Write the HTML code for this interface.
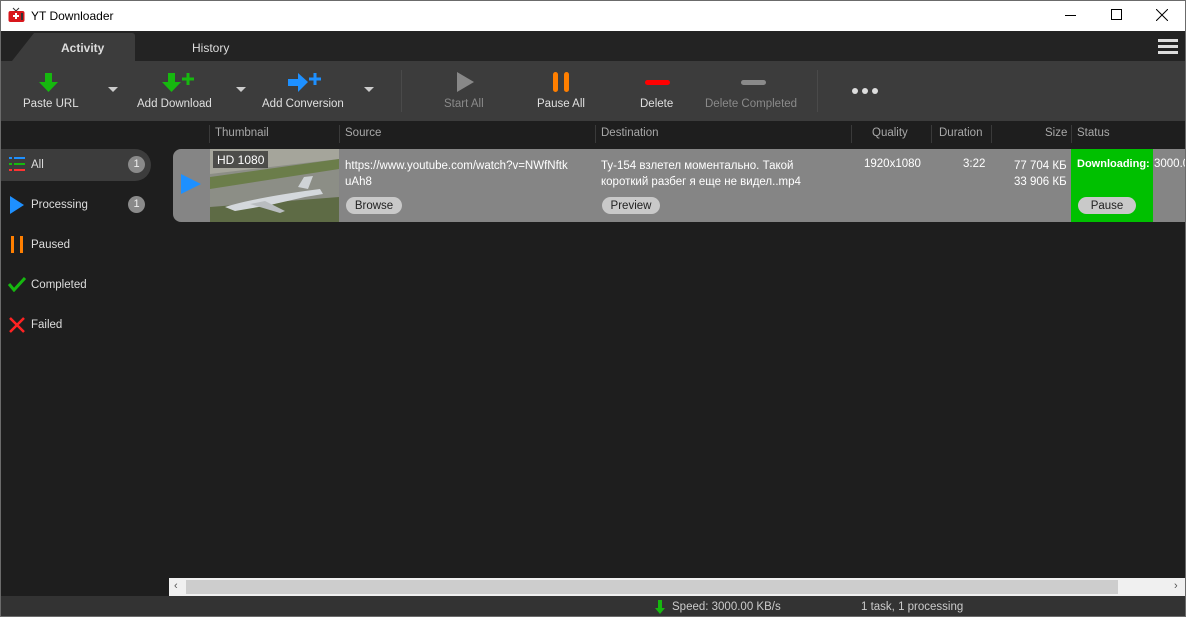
<!DOCTYPE html>
<html><head><meta charset="utf-8"><style>
*{box-sizing:border-box;margin:0;padding:0}
body{width:1186px;height:617px;overflow:hidden;font-family:"Liberation Sans",sans-serif;font-size:11px;background:#1e1e1e;position:relative}
.a{position:absolute}
.t{color:#ddd;white-space:nowrap}
.lbl{position:absolute;top:97px;font-size:11.5px;color:#e0e0e0;white-space:nowrap}
.dis{color:#8a8a8a}
.hd{position:absolute;top:126px;color:#a8a8a8;font-size:11.5px}
.sep{position:absolute;top:125px;width:1px;height:18px;background:#3a3a3a}
.side{position:absolute;left:31px;font-size:11.5px;color:#ddd}
.btn{position:absolute;background:#c9c9c9;color:#222;border-radius:9px;height:17px;font-size:11.5px;text-align:center;line-height:17px}
.badge{position:absolute;width:17px;height:17px;border-radius:50%;background:#8a8a8a;color:#eee;font-size:11px;text-align:center;line-height:17px}
.s2{position:relative;top:2px}
</style></head><body>
<div class="a" style="left:0;top:0;width:1186px;height:31px;background:#fff"></div>
<svg class="a" style="left:8px;top:7px" width="17" height="16" viewBox="0 0 17 16"><path d="M5 1 L8 4 L11 1" stroke="#333" fill="none"/><rect x="0.5" y="4" width="16" height="11" rx="2" fill="#d8161b"/><rect x="13" y="6" width="2" height="7" fill="#333"/><path d="M7 6h2v2h2v2h-2v2h-2v-2h-2v-2h2z" fill="#fff"/></svg>
<div class="a" style="left:31px;top:9px;font-size:12px;color:#000">YT Downloader</div>
<div class="a" style="left:1065px;top:15px;width:11px;height:1px;background:#000"></div>
<div class="a" style="left:1111px;top:9px;width:11px;height:11px;border:1px solid #000"></div>
<svg class="a" style="left:1156px;top:9px" width="12" height="12"><path d="M0 0L12 12M12 0L0 12" stroke="#000"/></svg>

<div class="a" style="left:0;top:31px;width:1186px;height:30px;background:#232323"></div>
<svg class="a" style="left:12px;top:33px" width="124" height="28"><path d="M0 28 L22 0 H120 Q123 0 123 3 V28Z" fill="#3c3c3c"/></svg>
<div class="a" style="left:61px;top:41px;font-size:12px;font-weight:bold;color:#ddd">Activity</div>
<div class="a" style="left:192px;top:41px;font-size:12px;color:#ddd">History</div>
<div class="a" style="left:1158px;top:39px;width:20px;height:3px;background:#ddd;box-shadow:0 6px 0 #ddd,0 12px 0 #ddd"></div>

<div class="a" style="left:0;top:61px;width:1186px;height:60px;background:#3c3c3c"></div>
<svg class="a" style="left:39px;top:73px" width="20" height="20"><path d="M6 0h7v9h6l-9.5 10L0 9h6z" fill="#16b80f"/></svg>
<div class="lbl" style="left:23px;top:98px">Paste URL</div>
<svg class="a" style="left:108px;top:87px" width="10" height="6"><path d="M0 0h10L5 5z" fill="#ccc"/></svg>
<svg class="a" style="left:162px;top:73px" width="32" height="20"><path d="M6 0h7v9h6l-9.5 10L0 9h6z" fill="#16b80f"/><path d="M26 0v12M20 6h12" stroke="#16b80f" stroke-width="3"/></svg>
<div class="lbl" style="left:137px;top:98px">Add Download</div>
<svg class="a" style="left:236px;top:87px" width="10" height="6"><path d="M0 0h10L5 5z" fill="#ccc"/></svg>
<svg class="a" style="left:288px;top:73px" width="34" height="20"><path d="M0 6h10V0l10 9-10 10v-6H0z" fill="#1e90ff"/><path d="M27 0v12M21 6h12" stroke="#1e90ff" stroke-width="3"/></svg>
<div class="lbl" style="left:262px;top:98px">Add Conversion</div>
<svg class="a" style="left:364px;top:87px" width="10" height="6"><path d="M0 0h10L5 5z" fill="#ccc"/></svg>
<div class="a" style="left:401px;top:70px;width:1px;height:42px;background:#4a4a4a"></div>
<svg class="a" style="left:456px;top:72px" width="20" height="20"><path d="M1 0l17 10L1 20z" fill="#888"/></svg>
<div class="lbl dis" style="left:444px;top:98px">Start All</div>
<div class="a" style="left:553px;top:72px;width:5px;height:20px;border-radius:3px;background:#ff7f00"></div>
<div class="a" style="left:564px;top:72px;width:5px;height:20px;border-radius:3px;background:#ff7f00"></div>
<div class="lbl" style="left:537px;top:98px">Pause All</div>
<div class="a" style="left:645px;top:80px;width:25px;height:5px;border-radius:3px;background:#f00"></div>
<div class="lbl" style="left:640px;top:98px">Delete</div>
<div class="a" style="left:741px;top:80px;width:25px;height:5px;border-radius:3px;background:#8a8a8a"></div>
<div class="lbl dis" style="left:705px;top:98px">Delete Completed</div>
<div class="a" style="left:817px;top:70px;width:1px;height:42px;background:#4a4a4a"></div>
<div class="a" style="left:852px;top:88px;width:6px;height:6px;border-radius:50%;background:#ddd;box-shadow:10px 0 0 #ddd,20px 0 0 #ddd"></div>

<div class="sep" style="left:209px"></div><div class="hd" style="left:215px;top:127px">Thumbnail</div>
<div class="sep" style="left:339px"></div><div class="hd" style="left:345px;top:127px">Source</div>
<div class="sep" style="left:595px"></div><div class="hd" style="left:601px;top:127px">Destination</div>
<div class="sep" style="left:851px"></div><div class="hd" style="left:872px;top:127px">Quality</div>
<div class="sep" style="left:931px"></div><div class="hd" style="left:939px;top:127px">Duration</div>
<div class="sep" style="left:991px"></div><div class="hd" style="left:1045px;top:127px">Size</div>
<div class="sep" style="left:1071px"></div><div class="hd" style="left:1077px;top:127px">Status</div>

<div class="a" style="left:1px;top:149px;width:150px;height:32px;border-radius:0 16px 16px 0;background:#3c3c3c"></div>
<svg class="a" style="left:9px;top:157px" width="16" height="14"><path d="M0 1h3M5 1h11" stroke="#1e90ff" stroke-width="2"/><path d="M0 7h3M5 7h11" stroke="#16b80f" stroke-width="2"/><path d="M0 13h3M5 13h11" stroke="#f33" stroke-width="2"/></svg>
<div class="side" style="top:159px">All</div><div class="badge" style="left:128px;top:156px">1</div>
<svg class="a" style="left:10px;top:196px" width="15" height="18"><path d="M0 0l14 9L0 18z" fill="#1e90ff"/></svg>
<div class="side" style="top:199px">Processing</div><div class="badge" style="left:128px;top:196px">1</div>
<div class="a" style="left:11px;top:236px;width:3px;height:17px;background:#ff7f00;box-shadow:9px 0 0 #ff7f00"></div>
<div class="side" style="top:239px">Paused</div>
<svg class="a" style="left:8px;top:277px" width="18" height="15"><path d="M1 7l5 6L17 1" stroke="#16b80f" stroke-width="3" fill="none"/></svg>
<div class="side" style="top:279px">Completed</div>
<svg class="a" style="left:9px;top:317px" width="16" height="16"><path d="M1 1l14 14M15 1L1 15" stroke="#f22" stroke-width="2.5"/></svg>
<div class="side" style="top:319px">Failed</div>

<div class="a" style="left:173px;top:149px;width:1013px;height:73px;border-radius:8px 0 0 8px;background:#858585"></div>
<svg class="a" style="left:181px;top:174px" width="20" height="20"><path d="M0 0l20 10L0 20z" fill="#1e90ff"/></svg>
<svg class="a" style="left:210px;top:149px" width="129" height="73"><rect width="129" height="73" fill="#8c8e86"/><path d="M0 0h129v10L0 25z" fill="#a5a59b"/><path d="M0 28l129-18v10L0 40z" fill="#6b7d4a"/><path d="M0 58l129-10v25H0z" fill="#5e6b45"/><path d="M15 58 Q40 50 95 42 L110 40 L113 45 L95 48 L60 56 L25 62Z" fill="#d4d8dc"/><path d="M88 38 L94 28 L103 27 L98 40Z" fill="#cfd3d6"/><path d="M40 55 L70 64 L75 62 L55 52Z" fill="#b9bdc0"/></svg>
<div class="a" style="left:213px;top:151px;padding:2px 4px 0;height:17px;background:rgba(40,40,40,.7);color:#fff;font-size:12px">HD 1080</div>
<div class="a t" style="left:345px;top:158px;color:#fff;line-height:16px;font-size:11.5px">https://www.youtube.com/watch?v=NWfNftk<br>uAh8</div>
<div class="btn" style="left:346px;top:197px;width:56px;line-height:18px">Browse</div>
<div class="a t" style="left:601px;top:158px;color:#fff;line-height:16px;font-size:11.5px">Ту-154 взлетел моментально. Такой<br>короткий разбег я еще не видел..mp4</div>
<div class="btn" style="left:602px;top:197px;width:58px;line-height:18px">Preview</div>
<div class="a t" style="left:864px;top:158px;color:#fff;font-size:11.5px">1920x1080</div>
<div class="a t" style="left:963px;top:158px;color:#fff;font-size:11.5px">3:22</div>
<div class="a t" style="left:1014px;top:158px;color:#fff;line-height:16px;font-size:11.5px">77 704 КБ<br>33 906 КБ</div>
<div class="a" style="left:1071px;top:149px;width:82px;height:73px;background:#00c000"></div>
<div class="a t" style="left:1077px;top:158px;color:#fff;font-weight:bold;font-size:11px">Downloading:</div>
<div class="a t" style="left:1154px;top:158px;color:#fff;font-size:11.5px">3000.0</div>
<div class="btn" style="left:1078px;top:197px;width:58px;line-height:18px">Pause</div>

<div class="a" style="left:169px;top:578px;width:1017px;height:18px;background:#f0f0f0"></div>
<div class="a" style="left:186px;top:580px;width:932px;height:14px;background:#cdcdcd"></div>
<div class="a" style="left:174px;top:580px;color:#555;font-size:11px">‹</div>
<div class="a" style="left:1174px;top:580px;color:#555;font-size:11px">›</div>
<div class="a" style="left:0;top:596px;width:1186px;height:21px;background:#333"></div>
<svg class="a" style="left:655px;top:600px" width="10" height="14"><path d="M3 0h4v8h3L5 14 0 8h3z" fill="#16b80f"/></svg>
<div class="a t" style="left:672px;top:601px;color:#ccc;font-size:11.5px">Speed: 3000.00 KB/s</div>
<div class="a t" style="left:861px;top:601px;color:#ccc;font-size:11.5px">1 task, 1 processing</div>
<div class="a" style="left:0;top:0;width:1186px;height:617px;border:1px solid #6b6b6b;pointer-events:none"></div>
</body></html>
